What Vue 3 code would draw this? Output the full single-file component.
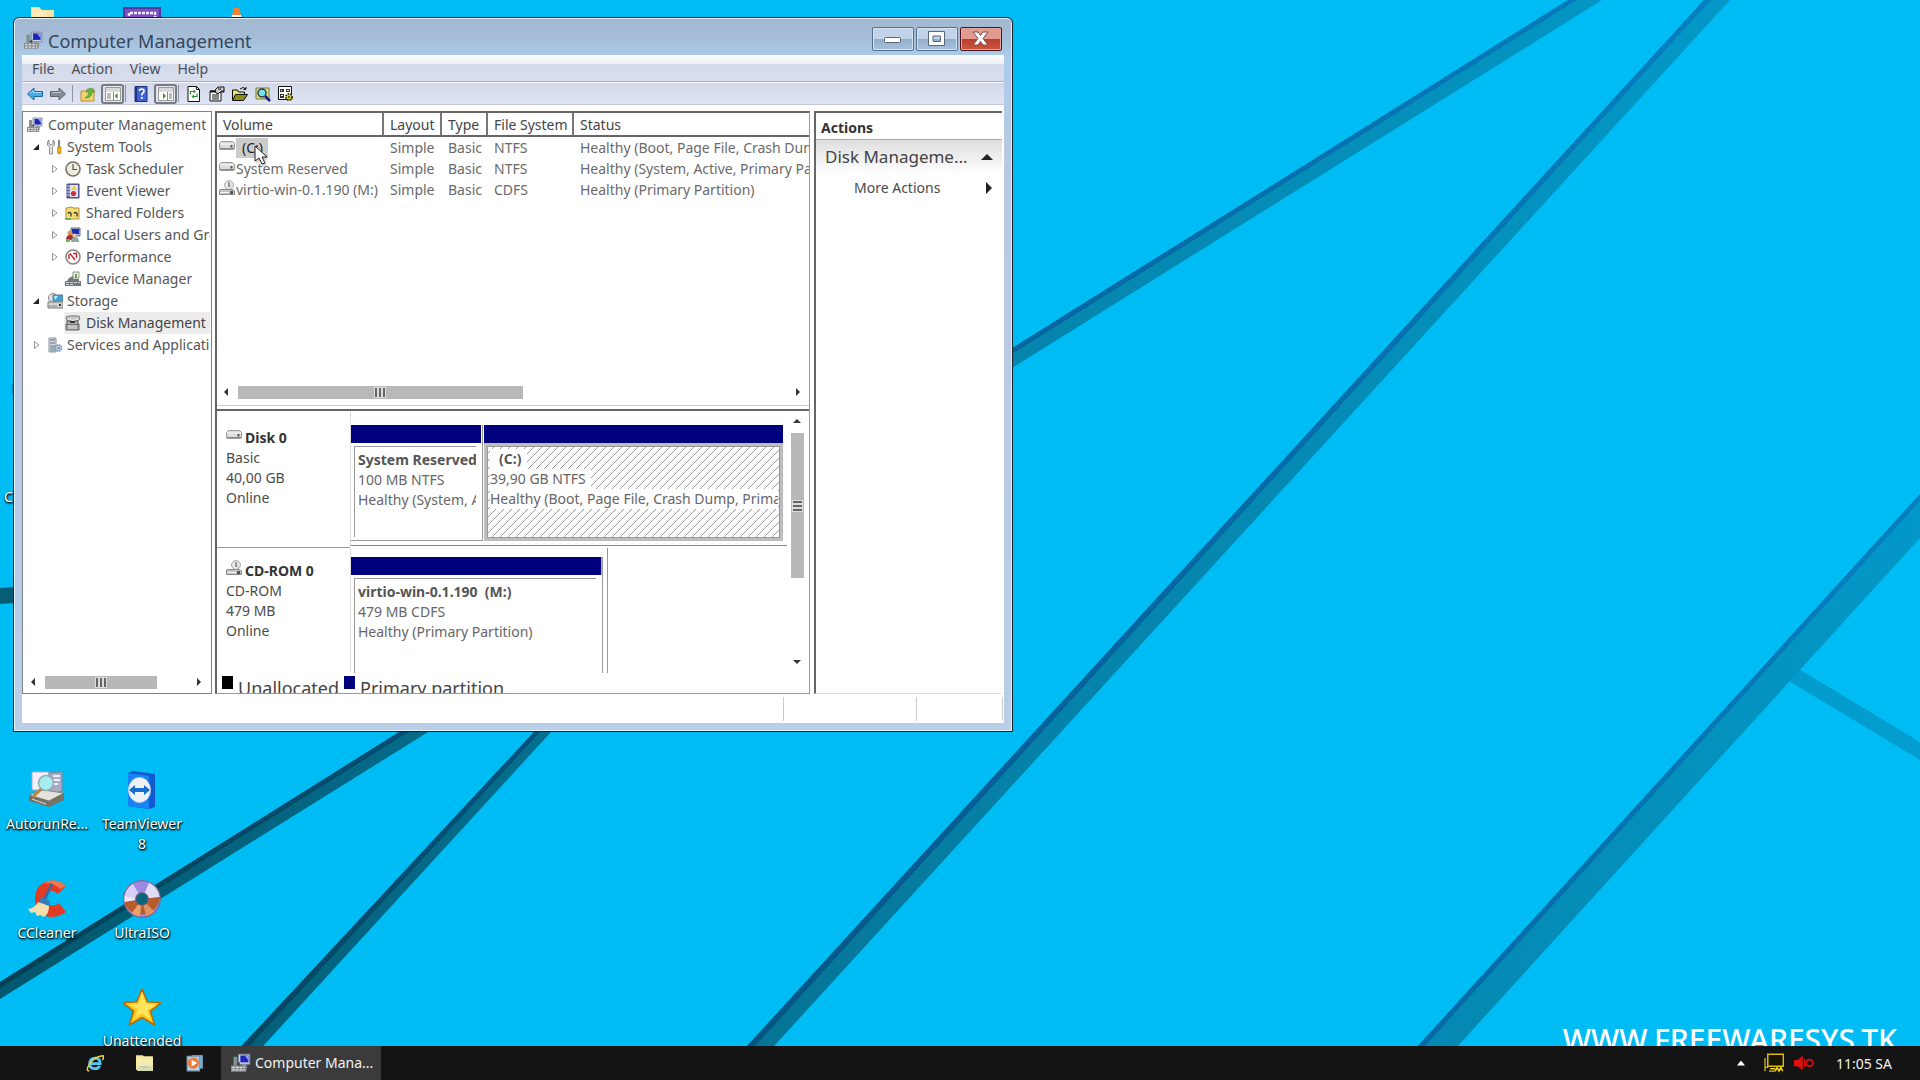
<script setup>
import { h } from 'vue'

const computer = '<path d="M6 1h9v8H6z" fill="#cfd6e6" stroke="#7c8699" stroke-width=".8"/><path d="M7.500 2h6.500v5.500H7.500z" fill="#1c25b8"/><path d="M11 2h3v4z" fill="#8fa2ee"/><path d="M2 3h3v7H2z" fill="#8b9094"/><path d="M2.500 4h2v1h-2z" fill="#3b6"/><path d="M9 9h3v2H9z" fill="#999"/><path d="M0 10h13l-1 5H0z" fill="#8a8f93"/><path d="M1 11.500h10M1 13.500h10" stroke="#e2e4e6" stroke-dasharray="2 1"/><path d="M4 9l3-2v3z" fill="#444"/>'
const drive = '<path d="M2.500 3.500h11l2 2v5q0 1-1 1h-13q-1 0-1-1v-5z" fill="#dcdcdc" stroke="#999"/><path d="M1 6h14" stroke="#f8f8f8"/><path d="M1 10.500h14" stroke="#888"/><path d="M11.500 7h2v2.500h-2z" fill="#555"/>'
const cdDrive = '<circle cx="10" cy="5" r="4.500" fill="#e6e6e6" stroke="#aaa"/><path d="M9 2h2v3l1 2H9z" fill="#999"/><path d="M1 9.500h13l1.500 1.500v3.500h-15V11z" fill="#c4c4c4" stroke="#888"/><path d="M1 12.500h9" stroke="#f4f4f4"/><path d="M11 11h3v3h-3z" fill="#555"/>'

const shapes = {
  computer,
  drive,
  cdDrive,
  tools: '<path d="M2 1v4l2 1 2-1V1l1.500 2v3L5.500 8v7h-3V8L.5 6V3z" fill="#e3e5e6" stroke="#777" stroke-width=".8"/><path d="M11.500 1h1v8h-1z" fill="#999" stroke="#888"/><path d="M10.500 8h3.500v6q-1.700 2-3.500 0z" fill="#f1b71c" stroke="#a87208" stroke-width=".6"/>',
  clock: '<circle cx="8" cy="8" r="7" fill="#efebdc" stroke="#77736b" stroke-width="1.600"/><path d="M8 3v5.500h4" fill="none" stroke="#555" stroke-width="1.200"/>',
  events: '<path d="M2 1h12v14H2z" fill="#5f63a8" stroke="#444a78"/><path d="M5 2h8v12H5z" fill="#dfe3f4"/><path d="M2 3h3M2 6h3M2 9h3M2 12h3" stroke="#ddd"/><path d="M9 2l3 5H6z" fill="#f3d31b"/><circle cx="8.500" cy="10.500" r="2.600" fill="#d52f3d"/>',
  shared: '<path d="M1 3l6-1 1 1h6v11H1z" fill="#f3dd73" stroke="#b1923a"/><path d="M3 8.500q1.500-2 3 0v3M9 8.500q1.500-2 3 0v3" fill="none" stroke="#443" stroke-width="1.400"/><path d="M0 13h6v2H0z" fill="#68b455"/>',
  users: '<path d="M6 1h9v8H6z" fill="#aab5dd" stroke="#697090"/><path d="M7 2h7v5H7z" fill="#1e2bb4"/><circle cx="5" cy="6" r="2.500" fill="#d59a52"/><path d="M1 13q0-5 4-5t4 5z" fill="#a92e3a"/><circle cx="9.500" cy="8.500" r="2" fill="#f0c486"/><path d="M6 15q0-5 4-5t4 5z" fill="#8bab9f"/><path d="M1 12h4v3H1z" fill="#7db04e"/>',
  performance: '<circle cx="8" cy="8" r="7" fill="#fff" stroke="#8a8181" stroke-width="1.500"/><path d="M4 5v5M5 4.500l5 6.500M8 4.500h3.500V9" fill="none" stroke="#c62c35" stroke-width="1.500"/>',
  device: '<path d="M8 1h6v6H8z" fill="#e7eee2" stroke="#8a9684"/><path d="M10 3h2v4h-2z" fill="#71a54f"/><path d="M4 7l4-2v3h6v2H2z" fill="#777"/><path d="M0 10h16v5H0z" fill="#707884"/><path d="M1 11.500h14M1 13.500h8" stroke="#ccd3dc" stroke-dasharray="3 1"/>',
  storage: '<circle cx="6" cy="5" r="4.500" fill="#dfe5e6" stroke="#888"/><path d="M6 2h10v6H6z" fill="#38a3dd" stroke="#68798a"/><path d="M7 3h4l-3 4z" fill="#bdeafa"/><path d="M1 9h15v6H1z" fill="#d2d4d6" stroke="#777"/><path d="M12 11h2v2h-2z" fill="#333"/><path d="M2 13h8" stroke="#888"/>',
  disk: '<path d="M1 2l3-1h10l1 3-2 2H2z" fill="#c8c8c8" stroke="#777"/><path d="M2 6h11v3H2zM1 9h13v6H1z" fill="#999" stroke="#666"/><path d="M3 4q5 3 10 0M3 8h9M3 11h9M3 13h9" stroke="#eee" fill="none"/><path d="M5 6h5v2H5z" fill="#333"/>',
  services: '<path d="M2 1h7v14H2z" fill="#d4dade" stroke="#8d969e"/><path d="M3 3h5M3 6h5" stroke="#667"/><path d="M3 8h5v7H3z" fill="#9aabb4"/><circle cx="11.500" cy="11" r="3" fill="#dde5ee" stroke="#6e8fb3" stroke-width="1.800" stroke-dasharray="1.500 .8"/><circle cx="11.500" cy="11" r="1.300" fill="#6e8fb3"/>',
  back: '<path d="M.5 8L7 2v3.500h8.500v5H7V14z" fill="#47ade8" stroke="#22649c"/><path d="M3 7.500L6.500 5v1.500H14" fill="none" stroke="#a8e0fa"/>',
  forward: '<path d="M15.500 8L9 2v3.500H.5v5H9V14z" fill="#858d97" stroke="#5d636b"/><path d="M2 6.500h8V5" fill="none" stroke="#c0c5cb"/>',
  up: '<path d="M1 5h5l1-2h7v12H1z" fill="#f1d470" stroke="#b49136"/><path d="M5 12q4-2 4-6H6l4.500-4L15 6h-3q0 6-7 6z" fill="#5ebc3c" stroke="#358426" stroke-width=".6"/>',
  paneLeft: '<path d="M.5 1.500h15v13H.5z" fill="#fff" stroke="#999"/><path d="M1 3h14M1 5h14" stroke="#b5b5b5"/><path d="M8.500 6v8" stroke="#888"/><path d="M2 8h4M2 10h4M2 12h4" stroke="#777"/><path d="M12.500 7v6l-3-3z" fill="#4d8c35"/>',
  paneRight: '<path d="M.5 1.500h15v13H.5z" fill="#fff" stroke="#999"/><path d="M1 3h14M1 5h14" stroke="#b5b5b5"/><path d="M9.500 6v8" stroke="#888"/><path d="M11 8h3M11 10h3M11 12h3" stroke="#777"/><path d="M5 7v6l3-3z" fill="#4d8c35"/>',
  help: '<path d="M2 .5h12v15H2z" fill="#3f62d6" stroke="#1f2e78"/><path d="M2 1h2v14H2z" fill="#22338c"/><path d="M6.500 5q0-2 2.200-2t2.300 2q0 1.500-1.300 2.300Q8.700 8 8.700 9.500" fill="none" stroke="#fff" stroke-width="1.700"/><path d="M7.900 11h1.800v1.800H7.900z" fill="#fff"/>',
  refresh: '<path d="M2 .5h8.500l3 3v12H2z" fill="#fff" stroke="#111"/><path d="M10.500.5v3h3" fill="none" stroke="#111"/><path d="M4.500 8.500V5.500H8M11 7.500v3H8" fill="none" stroke="#2f8a3a" stroke-width="1.200"/><path d="M7.500 3.500v4l2.500-2zM8 8.500v4l-2.500-2z" fill="#2f8a3a"/>',
  properties: '<path d="M1 5h11v10H1z" fill="#fff" stroke="#111"/><path d="M1 5.500h11" stroke="#111" stroke-width="2"/><path d="M3 9h7M3 11h7M3 13h7" stroke="#111"/><path d="M6 4l3-3h6v5h-4l-2 2-2-1z" fill="#ccc" stroke="#111"/><path d="M9 3h3M12 5h3" stroke="#111"/>',
  open: '<path d="M.5 14V4h5l1 2h6v3" fill="#e6e86c" stroke="#111"/><path d="M.5 14.500l3-6h12l-4 6z" fill="#8d8f1c" stroke="#111"/><path d="M8 3q3-3 6 0V1M14 3.500h-2.500" fill="none" stroke="#111"/>',
  search: '<path d="M1 2h13v11H1z" fill="#d9db8c" stroke="#777a38"/><circle cx="7" cy="7" r="4" fill="#6fe4ef" stroke="#333" stroke-width="1.400"/><path d="M10 10l5 5" stroke="#1b1b7c" stroke-width="2.500"/>',
  settings: '<path d="M.5.5h13v13H.5z" fill="#fff" stroke="#111"/><path d="M2 3h4v3H2zM8 3h4v3H8zM2 8h4v4H2z" fill="#333"/><path d="M3 4h1v1H3zM9 4h2v1H9zM3 9h2v1H3z" fill="#fff"/><circle cx="11" cy="11" r="3" fill="#e5dd3c" stroke="#332f00" stroke-width="2" stroke-dasharray="1.500 1"/><circle cx="11" cy="11" r="2" fill="#e5dd3c"/><circle cx="11" cy="11" r="1" fill="#333"/>',
  ie: '<path d="M3.300 8.600h9.200Q12.500 3.600 8 3.600T3.300 8.600q0 4.400 4.700 4.400 3 0 4.100-2.500" fill="none" stroke="#57c8f4" stroke-width="2.500"/><path d="M3 15Q-1 15 3.500 8.500T15 1.500q1.500 1-.5 4" fill="none" stroke="#f1d63b" stroke-width="1.300"/>',
  folder: '<path d="M0 1h6l1 1h8v12H0z" fill="#f5e79c"/><path d="M1 3h14v12H1z" fill="#f4ecae"/><path d="M1 11h14v4H1z" fill="#d7dfad"/><path d="M4 11h7v1H4z" fill="#9fc5cf"/>',
  media: '<path d="M5 1h10v12H5z" fill="#79a9c8"/><path d="M1 2h11v13H1z" fill="#b8d3e2" stroke="#6f9bb6"/><circle cx="6.500" cy="8" r="5" fill="#ee7934"/><path d="M5 5l5 3-5 3z" fill="#fff"/>',
  network: '<path d="M3 1h12.500v9.500H3z" fill="#191400" stroke="#d8bc12" stroke-width="1.200"/><path d="M.8 4v10.500M.8 11.500h2.500M4 14.500h5" stroke="#d8bc12"/><path d="M5 12.500h4M9 14.500l1.500-3 1.500 3 1.500-3 1.500 3" fill="none" stroke="#f0d31c" stroke-width="1.200"/>',
  sound: '<path d="M0 5.500h3L7 2v12l-4-3.500H0z" fill="#e01010"/><path d="M8.500 5v6" stroke="#e01010" stroke-width="1.500"/><circle cx="12.500" cy="8" r="2.700" fill="none" stroke="#d40c0c" stroke-width="1.500"/>',
  autorun: '<path d="M4 1h17v18H4z" fill="#f1f2fc" stroke="#a9abc9"/><path d="M21 2l13-1v19l-12 3z" fill="#a9abc6" stroke="#85879f"/><path d="M25 5h7M25 9h7M25 13h5" stroke="#eceef8" stroke-width="2"/><path d="M1 24l14-5 21 3-15 8z" fill="#e4e2da" stroke="#8d897c"/><path d="M1 24l20 6v6L1 30zM36 22v7l-15 7v-6z" fill="#777264"/><path d="M4 28l14 5" stroke="#dcd9ca"/><circle cx="18" cy="12" r="7.500" fill="#a4eef2" stroke="#9aa6ad" stroke-width="1.500"/><path d="M13 18l-8 8" stroke="#c28535" stroke-width="3"/>',
  teamviewer: '<path d="M5 2L10 0l22 3v33l-6 2-21-3z" fill="#1059cf"/><path d="M5 2l21 3v33L5 35z" fill="#1783f5"/><ellipse cx="16.500" cy="19" rx="11" ry="12.500" fill="#eef2f5" stroke="#bdd4ee"/><path d="M6 19l6-5v3h9v-3l6 5-6 5v-3h-9v3z" fill="#156ed0"/>',
  ccleaner: '<path d="M38 6Q30-1 20 1 8 4 7 18q0 14 11 18 10 3 20-4l-7-9q-6 5-11 1-4-4-2-9 4-8 12-1z" fill="#e33a24"/><path d="M38 6Q30-1 20 1l-5 3q9-3 17 5z" fill="#f3774a"/><path d="M23 3l2 1-7 16-3-1z" fill="#336ba1"/><path d="M13 17l9 4-1 6-10-3z" fill="#357db5"/><path d="M10 22l11 4q0 8-5 11l-4-2-3 1-2-4-4 1-3-4q7-1 10-7z" fill="#f4dfac"/>',
  disc: '<circle cx="18" cy="18" r="17.500" fill="#9c8ae2"/><path d="M18 18L1 15A17 17 0 0 1 9 3z" fill="#d7cffa"/><path d="M18 18l7-16a17 17 0 0 1 10 14z" fill="#e2dcfb"/><path d="M18 18L1 15v6z" fill="#ece7fb"/><path d="M18 18L1 21A17.500 17.500 0 0 0 35 16z" fill="#b85b2b"/><path d="M18 18L8 32l8 3z" fill="#e8a26f"/><path d="M18 18l4 17 8-5z" fill="#e09263"/><circle cx="18" cy="18" r="17.300" fill="none" stroke="#77618a"/><circle cx="18" cy="18" r="6" fill="#09667d" stroke="#725d76"/>',
  star: '<path d="M18 1l5 12 13 1-10 8 4 13-12-7-12 7 4-13L0 14l13-1z" fill="#ffc81c" stroke="#b36a05" stroke-width="1.500" stroke-linejoin="round"/><path d="M18 4l4 11 10 1-9 5 3 9-8-6-7 5 3-9-8-4 9-1z" fill="#ffe45c"/>',
  folderBig: '<path d="M3 1h8l3 3h12v24H3z" fill="#f6e2a0"/><path d="M3 1l16 5v24H3z" fill="#fbeab4"/>',
  frameBig: '<path d="M1 2h36v36H1z" fill="#7a4fc0" stroke="#54369c" stroke-width="2"/><path d="M6 22V7h26v15" fill="none" stroke="#f2ecfa" stroke-width="2.500" stroke-dasharray="3 1"/>',
  coneBig: '<path d="M14 2h5l8 30H6z" fill="#f48232"/><path d="M12 9h9l2 7H10z" fill="#f3f3f3"/>'
}
const sizes = { autorun: '0 0 38 38', teamviewer: '0 0 38 38', ccleaner: '0 0 38 38', disc: '0 0 36 36', star: '0 0 36 36', folderBig: '0 0 38 38', frameBig: '0 0 38 38', coneBig: '0 0 34 38' }
const Icon = ({ name }) => h('svg', { viewBox: sizes[name] || '0 0 16 16', 'aria-hidden': 'true', innerHTML: shapes[name] })
Icon.props = ['name']

const menus = ['File', 'Action', 'View', 'Help']
const tools = [
  [{ icon: 'back', label: 'Back' }, { icon: 'forward', label: 'Forward' }],
  [{ icon: 'up', label: 'Up' }, { icon: 'paneLeft', label: 'Console tree', on: true }],
  [{ icon: 'help', label: 'Help' }, { icon: 'paneRight', label: 'Action pane', on: true }],
  [{ icon: 'refresh', label: 'Refresh' }, { icon: 'properties', label: 'Properties' }, { icon: 'open', label: 'Open' }, { icon: 'search', label: 'Find' }, { icon: 'settings', label: 'Settings' }]
]
const tree = [
  { level: 0, icon: 'computer', text: 'Computer Management' },
  { level: 1, icon: 'tools', text: 'System Tools', arrow: 'open' },
  { level: 2, icon: 'clock', text: 'Task Scheduler', arrow: 'closed' },
  { level: 2, icon: 'events', text: 'Event Viewer', arrow: 'closed' },
  { level: 2, icon: 'shared', text: 'Shared Folders', arrow: 'closed' },
  { level: 2, icon: 'users', text: 'Local Users and Groups', arrow: 'closed' },
  { level: 2, icon: 'performance', text: 'Performance', arrow: 'closed' },
  { level: 2, icon: 'device', text: 'Device Manager' },
  { level: 1, icon: 'storage', text: 'Storage', arrow: 'open' },
  { level: 2, icon: 'disk', text: 'Disk Management', selected: true },
  { level: 1, icon: 'services', text: 'Services and Applications', arrow: 'closed' }
]
const columns = ['Volume', 'Layout', 'Type', 'File System', 'Status']
const volumes = [
  { icon: 'drive', name: '(C:)', selected: true, cells: ['Simple', 'Basic', 'NTFS', 'Healthy (Boot, Page File, Crash Dump, Primary Partition)'] },
  { icon: 'drive', name: 'System Reserved', cells: ['Simple', 'Basic', 'NTFS', 'Healthy (System, Active, Primary Partition)'] },
  { icon: 'cdDrive', name: 'virtio-win-0.1.190 (M:)', cells: ['Simple', 'Basic', 'CDFS', 'Healthy (Primary Partition)'] }
]
const disks = [
  {
    icon: 'drive', name: 'Disk 0', info: ['Basic', '40,00 GB', 'Online'], kind: 'hdd',
    parts: [
      { name: 'System Reserved', lines: ['100 MB NTFS', 'Healthy (System, Active, Primary Partition)'], kind: 'small' },
      { name: '(C:)', lines: ['39,90 GB NTFS', 'Healthy (Boot, Page File, Crash Dump, Primary Partition)'], kind: 'chosen' }
    ]
  },
  {
    icon: 'cdDrive', name: 'CD-ROM 0', info: ['CD-ROM', '479 MB', 'Online'], kind: 'cd',
    parts: [{ name: 'virtio-win-0.1.190\u00a0 (M:)', lines: ['479 MB CDFS', 'Healthy (Primary Partition)'], kind: 'medium' }]
  }
]
const shortcuts = [
  { icon: 'folderBig', text: '', x: 0, y: 6 },
  { icon: 'frameBig', text: '', x: 95, y: 6 },
  { icon: 'coneBig', text: '', x: 190, y: 6 },
  { icon: 'folderBig', text: 'File Viewer', x: 0, y: 335 },
  { icon: 'folderBig', text: 'Configuration', x: 0, y: 444 },
  { icon: 'autorun', text: 'AutorunRe...', x: 0, y: 771 },
  { icon: 'teamviewer', text: 'TeamViewer 8', x: 95, y: 771 },
  { icon: 'ccleaner', text: 'CCleaner', x: 0, y: 880 },
  { icon: 'disc', text: 'UltraISO', x: 95, y: 880 },
  { icon: 'star', text: 'Unattended', x: 95, y: 988 }
]
</script>

<template>
  <main class="desktop">
    <svg class="wallpaper" viewBox="0 0 1920 1080" preserveAspectRatio="none" aria-hidden="true">
      <defs>
        <linearGradient id="band" gradientUnits="userSpaceOnUse" x1="0" y1="900" x2="1800" y2="200">
          <stop offset="0" stop-color="#04586f" />
          <stop offset=".5" stop-color="#0680a6" />
          <stop offset="1" stop-color="#0398c8" />
        </linearGradient>
        <linearGradient id="edge" gradientUnits="userSpaceOnUse" x1="0" y1="900" x2="1800" y2="200">
          <stop offset="0" stop-color="#034055" />
          <stop offset=".5" stop-color="#045f98" />
          <stop offset="1" stop-color="#057fc0" />
        </linearGradient>
      </defs>
      <g fill="url(#band)">
        <path d="M0 982L1568 0h34L0 999z" />
        <path d="M1704 0h26L743 1080h-27z" />
        <path d="M534 732h17L232 1080h-22z" />
        <path d="M1920 494v44l-493 542h-40z" />
        <path d="M1799 669l121 73v18l-131-79z" opacity=".8" />
        <path d="M0 588l60-4v16l-60 4z" />
      </g>
      <g fill="url(#edge)">
        <path d="M0 982L1568 0h9L0 988z" />
        <path d="M1704 0h7L724 1080h-8z" />
        <path d="M534 732h6L218 1080h-8z" />
        <path d="M1920 494v7l-526 579h-7z" />
      </g>
    </svg>
    <p class="brand">WWW.FREEWARESYS.TK</p>

    <a v-for="(s, i) in shortcuts" :key="i" class="shortcut" href="#" :style="{ left: s.x + 'px', top: s.y + 'px' }">
      <Icon :name="s.icon" class="shortcut-icon" />
      <span>{{ s.text }}</span>
    </a>

    <section class="window">
      <header class="titlebar">
        <Icon name="computer" class="title-icon" />
        <h1>Computer Management</h1>
        <div class="controls">
          <button type="button" aria-label="Minimize"><svg viewBox="0 0 42 24"><rect x="12.500" y="10.500" width="16" height="5" rx="1" fill="#fff" stroke="#5a6778" /></svg></button>
          <button type="button" aria-label="Maximize"><svg viewBox="0 0 42 24"><path d="M12.500 4.500h16v14h-16zM17 9v5.500h7.500V9z" fill="#fff" fill-rule="evenodd" stroke="#5a6778" /></svg></button>
          <button type="button" aria-label="Close" class="close"><svg viewBox="0 0 42 24"><path d="M13 5h5l2.500 3.500L23 5h5l-5 6.500 5 6.500h-5l-2.500-3.500L18 18h-5l5-6.500z" fill="#fff" stroke="#7a4a48" /></svg></button>
        </div>
      </header>

      <div class="client">
        <nav class="menubar">
          <button v-for="m in menus" :key="m" type="button">{{ m }}</button>
        </nav>
        <div class="toolbar">
          <div v-for="(group, g) in tools" :key="g" class="tool-group">
            <button v-for="t in group" :key="t.icon" type="button" :aria-label="t.label" :class="{ on: t.on }"><Icon :name="t.icon" class="ico" /></button>
          </div>
        </div>

        <div class="panes">
          <aside class="tree-pane">
            <ul class="tree">
              <li v-for="n in tree" :key="n.text" :class="['level-' + n.level, { selected: n.selected }]">
                <svg v-if="n.level" class="arrow" viewBox="0 0 9 10" aria-hidden="true">
                  <path v-if="n.arrow === 'open'" d="M7 2v6H1z" fill="#222" />
                  <path v-if="n.arrow === 'closed'" d="M2.500 1.500v7l4.500-3.500z" fill="#fff" stroke="#999" />
                </svg>
                <span class="node"><Icon :name="n.icon" class="ico" /><span class="node-text">{{ n.text }}</span></span>
              </li>
            </ul>
            <div class="hscroll tree-scroll">
              <svg viewBox="0 0 6 10"><path d="M5 1v8L1 5z" fill="#333" /></svg>
              <div class="track"><div class="thumb"><i></i><i></i><i></i></div></div>
              <svg viewBox="0 0 6 10"><path d="M1 1v8l4-4z" fill="#333" /></svg>
            </div>
          </aside>

          <section class="middle">
            <div class="list">
              <table>
                <colgroup><col class="c-volume"><col class="c-layout"><col class="c-type"><col class="c-fs"><col></colgroup>
                <thead><tr><th v-for="c in columns" :key="c" scope="col">{{ c }}</th></tr></thead>
                <tbody>
                  <tr v-for="v in volumes" :key="v.name">
                    <td class="volume"><div><Icon :name="v.icon" class="ico" /><span :class="{ picked: v.selected }">{{ v.name }}</span></div></td>
                    <td v-for="c in v.cells" :key="c">{{ c }}</td>
                  </tr>
                </tbody>
              </table>
            </div>
            <div class="hscroll list-scroll">
              <svg viewBox="0 0 6 10"><path d="M5 1v8L1 5z" fill="#333" /></svg>
              <div class="track"><div class="thumb"><i></i><i></i><i></i></div></div>
              <svg viewBox="0 0 6 10"><path d="M1 1v8l4-4z" fill="#333" /></svg>
            </div>
            <div class="splitter"></div>
            <div class="disk-area">
              <div class="disks">
                <article v-for="d in disks" :key="d.name" class="disk" :class="d.kind">
                  <div class="disk-info">
                    <h2><Icon :name="d.icon" class="ico" />{{ d.name }}</h2>
                    <p v-for="t in d.info" :key="t">{{ t }}</p>
                  </div>
                  <div class="parts">
                    <div v-for="p in d.parts" :key="p.name" class="part" :class="p.kind">
                      <div class="part-bar"></div>
                      <div class="part-box">
                        <h3><span>{{ p.name }}</span></h3>
                        <p v-for="l in p.lines" :key="l"><span>{{ l }}</span></p>
                      </div>
                    </div>
                  </div>
                </article>
              </div>
              <div class="vscroll">
                <svg viewBox="0 0 10 6"><path d="M1 5h8L5 1z" fill="#333" /></svg>
                <div class="track"><div class="thumb"><i></i><i></i><i></i></div></div>
                <svg viewBox="0 0 10 6"><path d="M1 1h8L5 5z" fill="#333" /></svg>
              </div>
            </div>
            <div class="legend">
              <span class="swatch black"></span><span>Unallocated</span>
              <span class="swatch navy"></span><span>Primary partition</span>
            </div>
          </section>

          <aside class="actions">
            <h2>Actions</h2>
            <button type="button" class="group"><span>Disk Manageme...</span><svg viewBox="0 0 12 8"><path d="M0 7h12L6 1z" fill="#222" /></svg></button>
            <button type="button" class="more"><span>More Actions</span><svg viewBox="0 0 8 12"><path d="M1 0v12l6-6z" fill="#222" /></svg></button>
          </aside>
        </div>
        <footer class="statusbar"><span></span><span></span><span></span></footer>
      </div>
      <svg class="cursor" viewBox="0 0 14 21" aria-hidden="true"><path d="M1 1v15l4-3 3 6 3-1-3-6h5z" fill="#fff" stroke="#222" /></svg>
    </section>

    <footer class="taskbar">
      <div class="pinned">
        <button type="button" aria-label="Internet Explorer"><Icon name="ie" class="pin" /></button>
        <button type="button" aria-label="File Explorer"><Icon name="folder" class="pin" /></button>
        <button type="button" aria-label="Media Player"><Icon name="media" class="pin" /></button>
      </div>
      <button type="button" class="task"><Icon name="computer" class="task-icon" />Computer Mana...</button>
      <div class="tray">
        <button type="button" class="tray-up" aria-label="Show hidden icons"><svg viewBox="0 0 10 6"><path d="M1 5.500h8L5 .5z" fill="#fff" /></svg></button>
        <Icon name="network" class="pin" />
        <Icon name="sound" class="pin" />
        <time>11:05 SA</time>
      </div>
    </footer>
  </main>
</template>

<style>
body { overflow: hidden; }
</style>

<style scoped>
* { box-sizing: border-box; margin: 0; padding: 0; }
button { border: 0; background: none; font: inherit; color: inherit; }
svg { display: block; flex: none; }
.desktop { position: relative; height: 100vh; overflow: hidden; background: #00bcf4; font: 14px/20px "Noto Sans", "Open Sans", sans-serif; color: #555; }
.wallpaper { position: absolute; inset: 0; width: 100%; height: 100%; }
.brand { position: absolute; right: 23px; bottom: 20px; font-size: 30px; line-height: 40px; font-weight: 500; color: #fff; white-space: nowrap; }

.shortcut { position: absolute; width: 94px; display: flex; flex-direction: column; align-items: center; gap: 5px; color: #fff; text-decoration: none; text-align: center; text-shadow: 1px 1px 2px #000, 0 1px 2px #000; }
.shortcut span { width: 94px; padding: 0 4px; }
.shortcut-icon { width: 38px; height: 38px; }

.window { position: absolute; left: 13px; top: 17px; width: min(1000px, 100vw - 26px); border: 1px solid #15222e; border-radius: 6px 6px 0 0; padding: 0 8px 8px; background: linear-gradient(#a3b8d0 0, #a6bdd8 20px, #abcbe9 37px, #b8c9e3 150px, #b9cee7); box-shadow: inset 0 0 0 1px #e6f2fb; }
.titlebar { height: 37px; display: flex; align-items: center; padding: 0 2px; gap: 5px; }
.title-icon { width: 19px; height: 19px; margin-top: 7px; }
h1 { flex: 1; margin-top: 8px; font-size: 18px; line-height: 24px; font-weight: 400; color: #34465c; }
.controls { display: flex; gap: 2px; margin-top: 5px; }
.controls button { width: 42px; height: 24px; border: 1px solid #54708f; border-radius: 2px; background: linear-gradient(#c2d3e7 50%, #92adcb 50%, #a9c3de); box-shadow: inset 0 0 0 1px #d5e3f2; }
.controls .close { border-color: #4d1420; background: linear-gradient(#e09a92 50%, #bc3c2a 50%, #cc5a40); box-shadow: inset 0 0 0 1px #e3a79e; }
.controls svg { width: 42px; height: 24px; margin: -1px; }

.client { background: #fff; }
.menubar { height: 27px; display: flex; padding-left: 10px; gap: 17px; border-bottom: 1px solid #adb5c4; background: linear-gradient(#fdfdfe, #eceff7 9px, #d4daea 9px, #d8deee); color: #4a4f58; }
.menubar button { height: 27px; line-height: 27px; }
.toolbar { height: 23px; display: flex; align-items: center; border-top: 1px solid #f4f6fb; border-bottom: 1px solid #c3c9d6; background: linear-gradient(#d3d9ea, #dfe4f4); padding-left: 3px; }
.tool-group { display: flex; align-items: center; gap: 3px; padding-right: 1px; margin-right: 5px; border-right: 1px solid #8d94a3; height: 17px; }
.tool-group:first-child { padding-right: 4px; }
.tool-group:last-child { border: 0; gap: 3px; }
.tool-group button { width: 20px; height: 20px; display: grid; place-items: center; }
.tool-group button.on { width: 23px; border: 2px solid #777b86; border-radius: 3px; background: #e4e6ee; }
.ico { width: 16px; height: 16px; }

.panes { margin-top: 6px; padding-right: 2px; display: grid; grid-template-columns: 190px minmax(0, 1fr) 188px; gap: 4px; column-gap: 4px; height: 583px; }
.tree-pane { border: 1px solid #7d828a; display: flex; flex-direction: column; min-width: 0; overflow: hidden; padding: 2px 1px 0 0; }
.tree { flex: 1; list-style: none; }
.tree li { height: 22px; display: flex; align-items: center; padding-left: 3px; white-space: nowrap; }
.tree .level-1 { padding-left: 9px; }
.tree .level-2 { padding-left: 27px; }
.arrow { width: 9px; height: 10px; margin-right: 5px; }
.node { display: flex; align-items: center; gap: 5px; flex: 1; height: 22px; min-width: 0; padding-left: 1px; }
.level-1 .node { gap: 4px; }
.node-text { overflow: hidden; }
.selected .node { background: #ececec; color: #444; }

.hscroll { display: flex; align-items: center; gap: 9px; }
.hscroll svg { width: 6px; height: 10px; }
.track { flex: 1; }
.thumb { display: flex; align-items: center; justify-content: center; gap: 2px; background: #b8b8b8; }
.thumb i { background: #666; box-shadow: 0 0 0 1px #ddd; }
.hscroll .thumb { height: 13px; }
.hscroll .thumb i { width: 2px; height: 9px; }
.tree-scroll { height: 22px; padding: 0 8px 0 7px; }
.tree-scroll .thumb { width: 79%; }
.list-scroll { height: 26px; padding: 0 8px 0 6px; }
.list-scroll .thumb { width: 52%; }

.middle { margin-left: -1px; border: 1px solid #999; border-width: 2px 1px 1px 2px; border-color: #666 #999 #999 #666; display: flex; flex-direction: column; overflow: hidden; }
.list { height: 266px; overflow: hidden; }
table { width: 100%; table-layout: fixed; border-collapse: separate; border-spacing: 0; }
.c-volume { width: 167px; } .c-layout { width: 58px; } .c-type { width: 46px; } .c-fs { width: 86px; }
th { height: 24px; font-weight: 400; text-align: left; line-height: 20px; padding: 2px 0 0 6px; color: #444; border-bottom: 2px solid #666; border-right: 2px solid #777; white-space: nowrap; }
th:last-child { border-right: 0; }
td { height: 21px; padding: 0 0 0 6px; white-space: nowrap; overflow: hidden; color: #6a6a6a; }
td.volume { padding: 0 0 0 2px; }
.volume div { display: flex; align-items: center; gap: 1px; height: 21px; }
.volume .ico { margin-bottom: 4px; }
.volume .picked { background: #ccc; padding: 0 5px 0 6px; color: #222; }
.splitter { height: 6px; border-top: 1px solid #ccc; border-bottom: 2px solid #666; }

.disk-area { flex: 1; display: flex; min-height: 0; overflow: hidden; }
.disks { flex: 1; min-width: 0; display: flex; flex-direction: column; }
.disk { display: flex; height: 132px; flex: none; }
.disk.hdd { height: 137px; }
.disk-info { width: 133px; padding: 13px 0 0 9px; border-bottom: 1px solid #999; color: #4b4b4b; }
.hdd .disk-info { padding-top: 17px; }
.disk-info h2, .part h3 { font-size: 14px; line-height: 20px; font-weight: 700; color: #333; white-space: nowrap; }
.disk-info h2 { display: flex; gap: 3px; }
.disk-info h2 .ico { margin-top: -1px; }
.disk-info p, .part p { height: 20px; white-space: nowrap; }
.parts { min-width: 0; display: flex; padding: 9px 4px 0 0; border-left: 1px solid #ddd; border-right: 1px solid #999; }
.hdd .parts { flex: 1; border-right: 0; border-bottom: 1px solid #888; margin-bottom: 2px; padding: 14px 4px 4px 0; gap: 1px; }
.part { display: flex; flex-direction: column; min-width: 0; }
.part-bar { height: 18px; background: #00007f; flex: none; }
.small { width: 132px; border-right: 1px solid #999; border-bottom: 1px solid #999; }
.small .part-bar { margin-right: 1px; }
.part-box { flex: 1; margin: 3px 6px 3px 3px; padding: 3px 0 0 3px; border-left: 1px solid #999; border-top: 1px solid #999; overflow: hidden; color: #666; }
.part h3 { color: #555; }
.chosen { flex: 1; }
.chosen .part-box { margin: 0; border: 3px solid #bdbdbd; outline: 1px solid #999; outline-offset: -4px; padding: 3px 2px 0 3px; background: linear-gradient(135deg, #fff 45%, #999 48% 52%, #fff 55%) 0 0 / 8px 8px; }
.chosen h3, .chosen p { overflow: hidden; }
.chosen h3 span, .chosen p span { background: #fff; display: inline-block; padding-right: 5px; }
.chosen h3 span { padding: 0 6px 0 9px; }
.medium { width: 252px; border-right: 1px solid #999; }
.medium .part-bar { border-right: 1px solid #aac; }
.medium .part-box { margin-bottom: 0; }
.vscroll { width: 22px; display: flex; flex-direction: column; align-items: center; gap: 9px; padding: 7px 2px 8px 0; }
.vscroll svg { width: 10px; height: 6px; }
.vscroll .thumb { width: 13px; height: 145px; flex-direction: column; }
.vscroll .thumb i { width: 9px; height: 2px; }
.legend { height: 20px; display: flex; gap: 5px; padding-left: 5px; overflow: hidden; font-size: 18px; line-height: 30px; color: #444; white-space: nowrap; }
.swatch { width: 11px; height: 13px; margin-top: 3px; flex: none; }
.black { background: #000; }
.navy { background: #00007f; }

.actions { border-left: 2px solid #666; border-top: 2px solid #666; border-bottom: 1px solid #ddd; color: #4a4a4a; }
.actions h2 { height: 27px; font-size: 14px; line-height: 30px; padding-left: 5px; color: #333; border-bottom: 1px solid #aaa; }
.actions button { width: 100%; display: flex; align-items: center; justify-content: space-between; }
.actions .group { height: 34px; padding: 0 9px; font-size: 17px; background: linear-gradient(#dedede, #fff); color: #444; }
.group svg { width: 12px; height: 8px; }
.actions .more { height: 28px; padding: 0 9px 0 38px; }
.more svg { width: 8px; height: 12px; }
.statusbar { height: 29px; display: grid; grid-template-columns: 1fr 133px 87px; padding-top: 3px; }
.statusbar span { height: 24px; border-right: 1px solid #ccc; }
.statusbar span:last-child { margin-right: 1px; }
.cursor { position: absolute; left: 240px; top: 127px; width: 14px; height: 21px; filter: drop-shadow(1px 2px 1px #8888); }

.taskbar { position: absolute; left: 0; right: 0; bottom: 0; height: 34px; display: flex; align-items: center; background: #141414; color: #f2f2f2; }
.pinned { width: 221px; display: flex; gap: 32px; padding-left: 86px; }
.pin { width: 18px; height: 18px; }
.task { width: 160px; height: 34px; display: flex; align-items: center; gap: 4px; padding-left: 10px; background: #3b3b3b; white-space: nowrap; }
.task-icon { width: 20px; height: 20px; }
.tray { margin-left: auto; display: flex; align-items: center; padding-right: 28px; }
.tray-up { margin-right: 18px; }
.tray-up svg { width: 10px; height: 6px; }
.tray .pin { width: 20px; height: 20px; margin-right: 10px; }
.tray time { margin-left: 12px; line-height: 22px; padding-top: 2px; }
</style>
